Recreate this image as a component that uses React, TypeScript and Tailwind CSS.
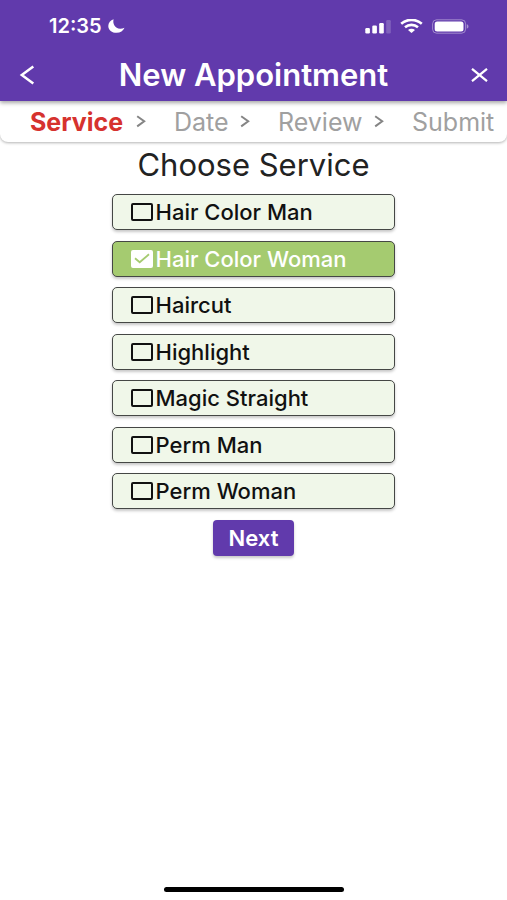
import { useState } from "react";

const services = [
  "Hair Color Man",
  "Hair Color Woman",
  "Haircut",
  "Highlight",
  "Magic Straight",
  "Perm Man",
  "Perm Woman",
];

const steps = ["Service", "Date", "Review", "Submit"];

function StatusBar() {
  return (
    <div className="flex h-12 items-end justify-between pr-[38px] pl-[49px] text-white">
      <div className="flex h-11 items-center gap-[6px]">
        <span className="text-[20px] leading-6 font-semibold">12:35</span>
        <svg className="h-[14px] w-[17px]" viewBox="0 0 17 14" fill="currentColor" aria-hidden="true">
          <path d="M5.6 0.3C4.4 4.6 6.9 9.7 12.2 9.7c1.6 0 3-.3 4.300-.9-1.200 3-4.200 5-7.900 5C3.900 13.800.3 10.900.3 6.900.3 3.900 2.500 1.300 5.600.3Z" />
        </svg>
      </div>
      <div className="flex h-11 items-center gap-[9px]">
        <svg className="h-[15px] w-[26px]" viewBox="0 0 26 15" fill="currentColor" aria-hidden="true">
          <rect x="0.300" y="9" width="4.600" height="5.500" rx="1.200" />
          <rect x="7.300" y="6.500" width="4.600" height="8" rx="1.200" />
          <rect x="14.200" y="4" width="4.600" height="10.500" rx="1.200" />
          <rect x="21.200" y="1" width="4.600" height="13.500" rx="1.200" opacity="0.200" />
        </svg>
        <svg className="h-[14px] w-[23px]" viewBox="0 0 23 14" fill="none" stroke="currentColor" aria-hidden="true">
          <path d="M1.200 4.700C7 -.4 16 -.4 21.800 4.700" strokeWidth="2.600" />
          <path d="M5 8.200c3.700-3.100 9.300-3.100 13 0" strokeWidth="2.600" />
          <path d="M11.500 14 8 11c2-1.700 5-1.700 7 0Z" fill="currentColor" stroke="none" />
        </svg>
        <svg className="h-[15px] w-[37px]" viewBox="0 0 37 15" aria-hidden="true">
          <rect x="0.600" y="0.800" width="33" height="13.400" rx="4" fill="none" stroke="#fff" strokeOpacity="0.400" />
          <rect x="2.700" y="2.500" width="28.800" height="10" rx="2.500" fill="#fff" />
          <path d="M34.800 5.300c2.200.7 2.200 3.700 0 4.400Z" fill="#fff" fillOpacity="0.450" />
        </svg>
      </div>
    </div>
  );
}

function Chevron() {
  return (
    <svg
      className="h-[13px] w-[10px] text-[#858585]"
      viewBox="0 0 10 13"
      fill="none"
      stroke="currentColor"
      strokeWidth="2"
      aria-hidden="true"
    >
      <path d="m1.200 1.200 7 5.100-7 5.100" />
    </svg>
  );
}

function ServiceOption({ name, checked, onToggle }: { name: string; checked: boolean; onToggle: () => void }) {
  return (
    <label
      className={`flex h-9 w-full cursor-pointer items-center gap-[3px] rounded-[5px] border border-[#454745] pl-[18px] text-[22px] leading-6 font-medium shadow-[0_2px_3px_rgba(0,0,0,0.220)] ${
        checked ? "bg-[#a5cb70] text-white" : "bg-[#f0f7e9] text-[#111]"
      }`}
    >
      <span className="grid shrink-0 place-items-center">
        <input
          type="checkbox"
          checked={checked}
          onChange={onToggle}
          className="col-start-1 row-start-1 h-[18px] w-[22px] cursor-pointer appearance-none rounded-[2px] border-2 border-[#111] checked:border-white checked:bg-white"
        />
        {checked && (
          <svg
            className="pointer-events-none col-start-1 row-start-1 h-[11px] w-4"
            viewBox="0 0 16 11"
            fill="none"
            stroke="#a5cb70"
            strokeWidth="1.800"
            aria-hidden="true"
          >
            <path d="m1 5.300 4.700 4L15 1.300" />
          </svg>
        )}
      </span>
      {name}
    </label>
  );
}

export default function App() {
  const [selected, setSelected] = useState("Hair Color Woman");

  return (
    <div className="flex min-h-screen flex-col bg-white font-['Inter','Liberation_Sans',sans-serif]">
      <header className="relative bg-[#613aac] shadow-[0_2px_4px_rgba(0,0,0,0.350)]">
        <StatusBar />
        <div className="flex h-[53px] items-center justify-between px-[19px] text-white">
          <button type="button" aria-label="Back" className="cursor-pointer">
            <svg className="h-5 w-[17px]" viewBox="0 0 17 20" fill="none" stroke="currentColor" strokeWidth="2.500" aria-hidden="true">
              <path d="M14.300 1.500 2.800 10l11.500 8.500" />
            </svg>
          </button>
          <h1 className="text-[31px] leading-9 font-semibold">New Appointment</h1>
          <button type="button" aria-label="Close" className="cursor-pointer">
            <svg className="h-[14px] w-[17px]" viewBox="0 0 17 14" fill="none" stroke="currentColor" strokeWidth="2.200" aria-hidden="true">
              <path d="m1 .8 15 12.400M16 .8 1 13.200" />
            </svg>
          </button>
        </div>
      </header>

      <nav aria-label="Booking steps" className="rounded-b-lg bg-white pr-3 pl-[30px] shadow-[0_1px_3px_rgba(0,0,0,0.300)]">
        <ol className="grid h-[41px] grid-cols-[144fr_104fr_134fr_83fr] items-center text-[25px] leading-7">
          {steps.map((step, i) => (
            <li
              key={step}
              aria-current={i === 0 ? "step" : undefined}
              className={`flex items-center justify-between ${i < 3 ? "pr-[28px]" : ""} ${
                i === 0 ? "font-bold text-[#d6322e]" : "text-[#a0a0a0]"
              }`}
            >
              {step}
              {i < steps.length - 1 && <Chevron />}
            </li>
          ))}
        </ol>
      </nav>

      <main className="flex flex-1 flex-col items-center">
        <h2 className="mt-[5px] mb-[11px] text-[31px] leading-9 text-[#222]">Choose Service</h2>
        <form
          onSubmit={(event) => event.preventDefault()}
          className="flex min-h-[362px] w-[56%] flex-col items-center justify-between"
        >
          {services.map((name) => (
            <ServiceOption
              key={name}
              name={name}
              checked={selected === name}
              onToggle={() => setSelected(selected === name ? "" : name)}
            />
          ))}
          <button
            type="submit"
            className="h-9 cursor-pointer rounded-[4px] bg-[#613aac] px-4 text-[22px] leading-6 font-semibold text-white shadow-[0_2px_3px_rgba(0,0,0,0.220)]"
          >
            Next
          </button>
        </form>
      </main>

      <footer className="flex justify-center pb-2">
        <div className="h-[5px] w-[180px] rounded-full bg-black" />
      </footer>
    </div>
  );
}
